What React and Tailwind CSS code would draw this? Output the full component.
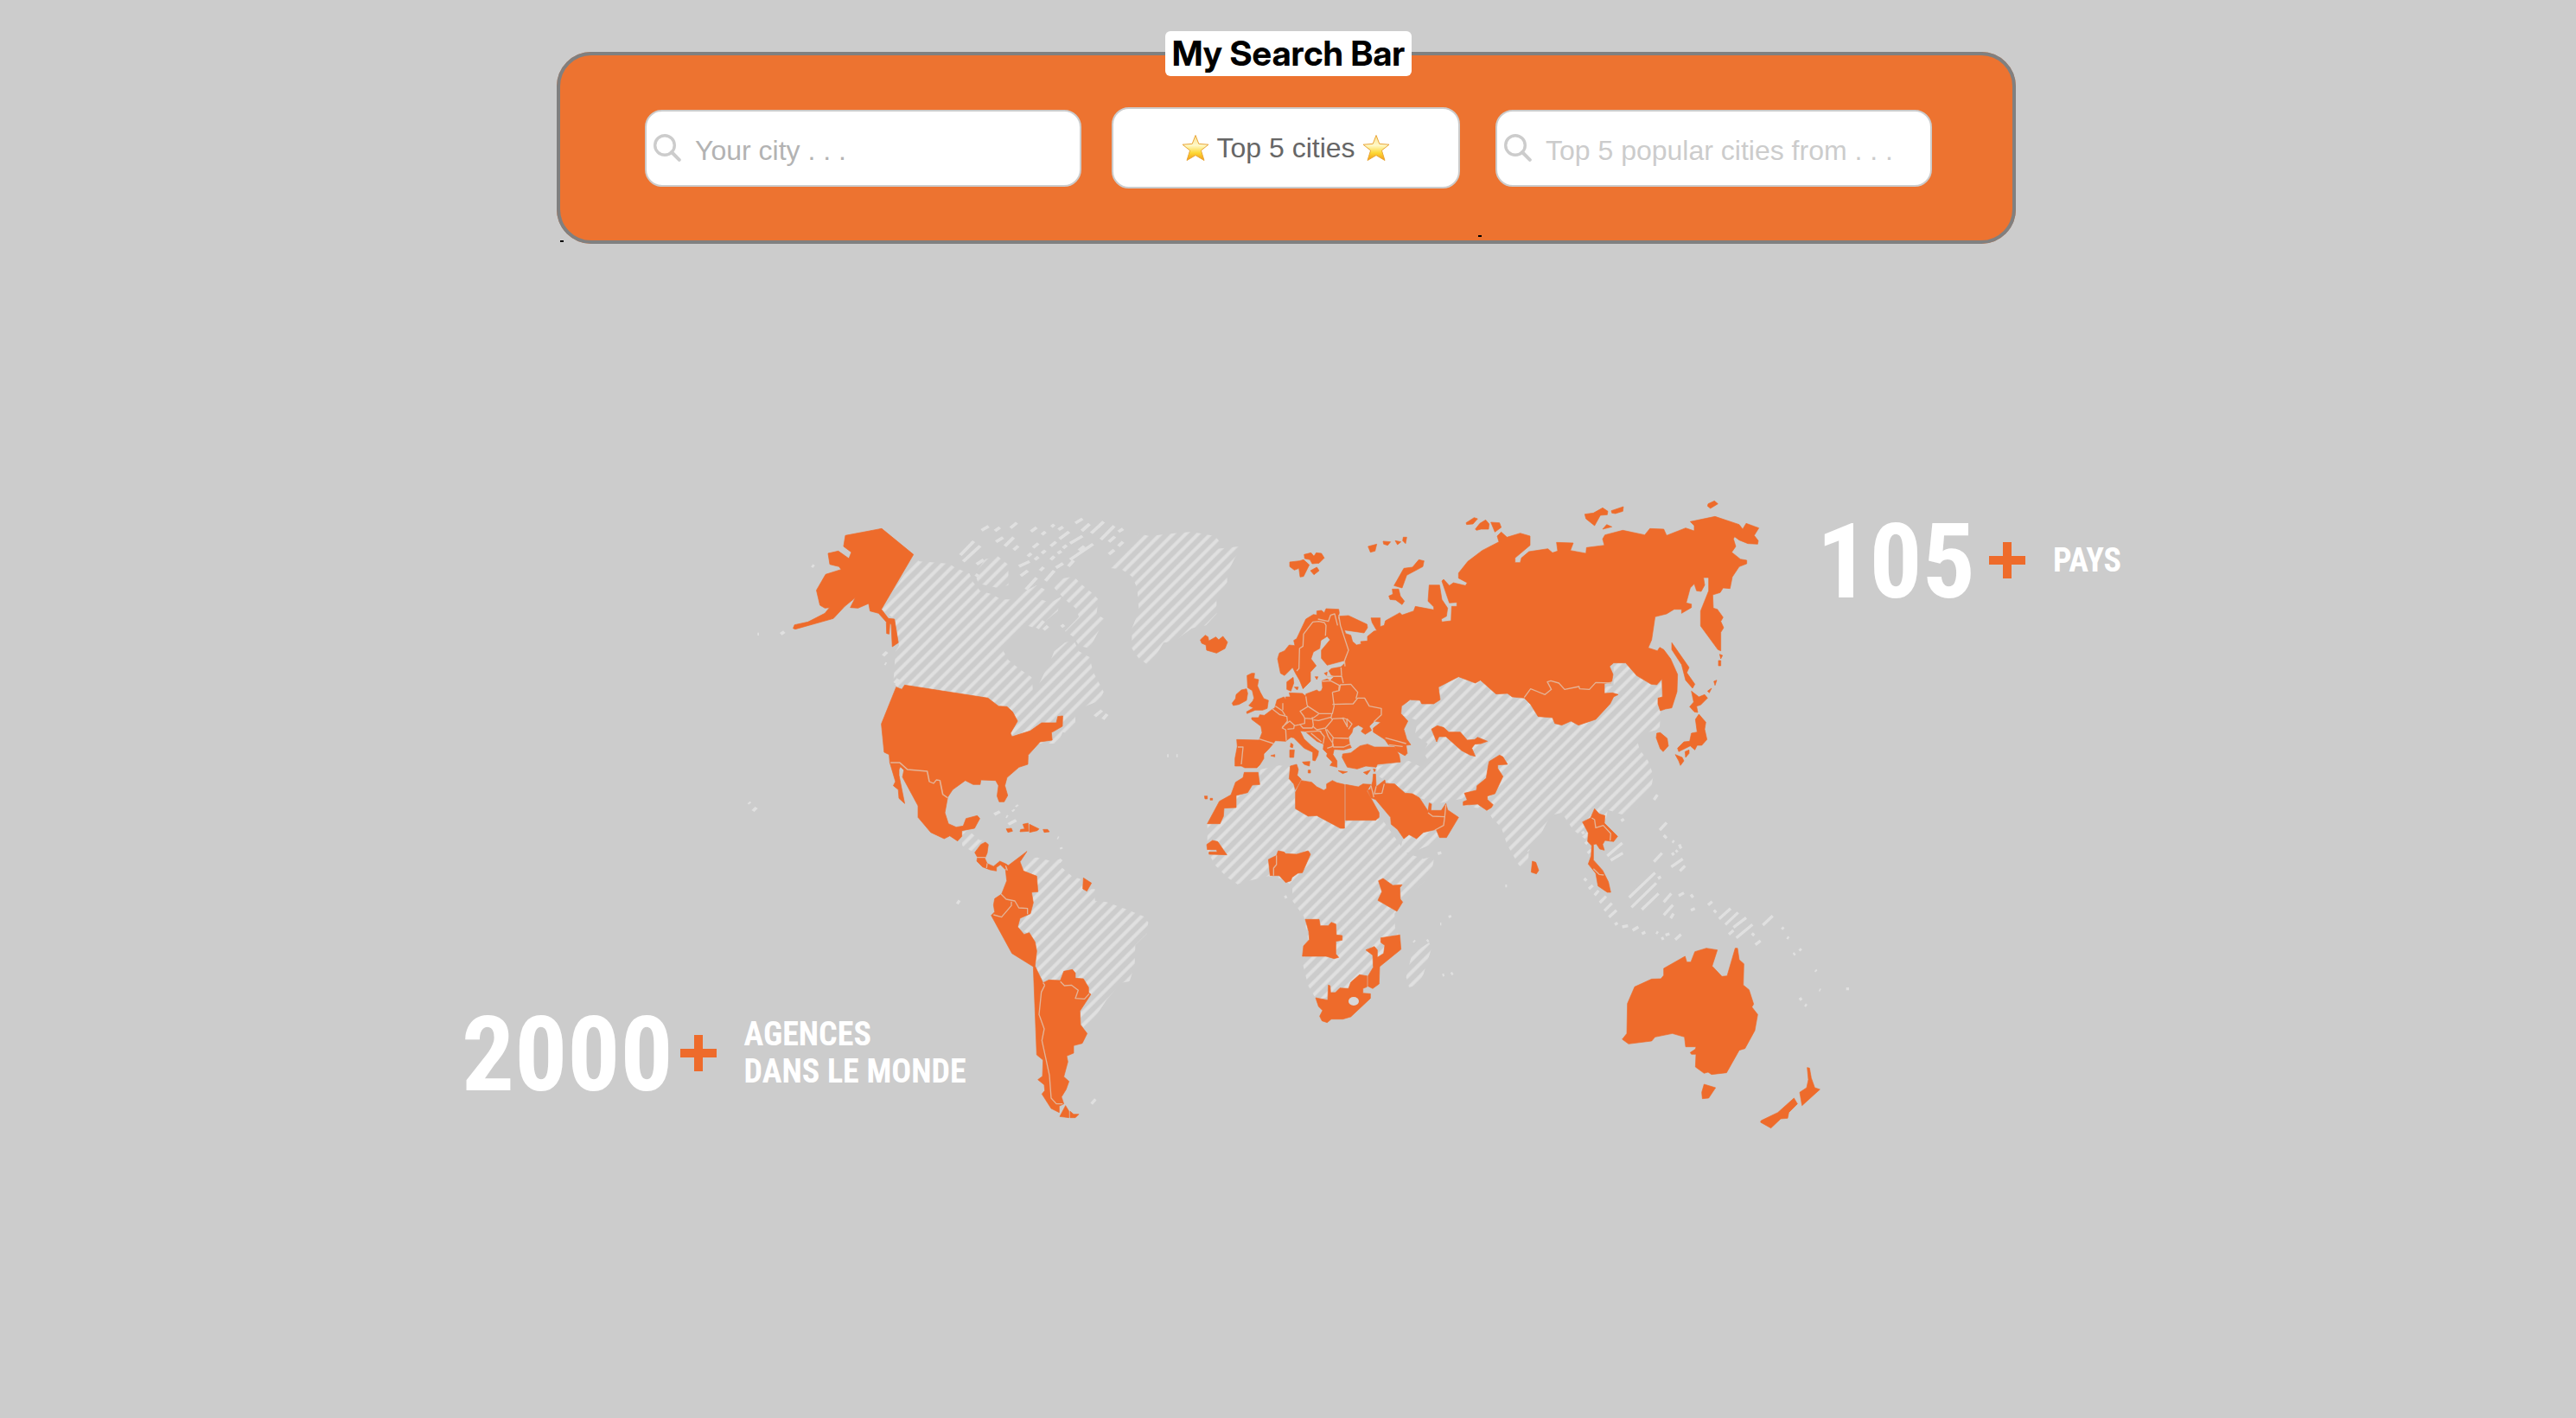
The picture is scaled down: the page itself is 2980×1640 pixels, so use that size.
// Each sheet of the map is drawn on its own grid; `at` places the grid on the world.
const WEST = "translate(840 560) scale(0.40816 0.33333)";
const SOUTH_AMERICA = "translate(960 860) scale(0.33333)";
const EUROPE = "translate(1380 560) scale(0.33333)";
const AFRICA = "translate(1380 860) scale(0.33333)";
const ASIA = "translate(1700 560) scale(0.33333)";
const OCEANIA = "translate(1780 880) scale(0.33333)";

const hatched = [
  {
    at: WEST,
    d: `M536,256 L548,268 600,272 632,276 650,290 690,310 700,340 720,370 750,380 780,400 820,400 850,370 880,350 910,370 890,400 920,410 950,390 940,440 910,470 880,500 850,490 800,540 786,580 800,610 830,640 866,670 870,720 884,700 900,660 920,610 930,580 960,550 985,540 1000,580 1030,600 1040,650 1070,720 1060,750 1000,780 990,800 990,830 965,865 954,860 940,900 820,900 500,720 474,690 480,580 490,560 477,468 440,434Z
    M940,330 L985,320 1010,350 1040,380 1055,400 1050,450 1075,470 1060,500 1030,570 1000,560 985,530 960,510 1000,460 990,430 960,400 930,360Z
    M735,260 L770,250 800,280 800,350 770,360 715,345 705,310Z
    M1080,290 L1150,200 1170,172 1200,180 1270,170 1320,165 1385,180 1400,200 1385,225 1460,215 1440,260 1420,310 1420,340 1390,400 1390,450 1360,490 1320,500 1270,545 1240,550 1200,630 1170,605 1150,570 1150,500 1170,440 1165,360 1150,320 1120,295Z`,
  },
  {
    at: SOUTH_AMERICA,
    d: `M455,310 L480,300 520,335 540,335 505,380 460,355Z
    M684,400 L720,395 770,408 800,400 805,430 840,460 870,470 880,505 920,505 920,545 960,550 1030,575 1090,600 1105,620 1100,660 1060,700 1058,770 1040,825 1010,830 960,890 920,950 880,985 850,940 850,820 745,830 712,780 690,660 650,640 690,590 700,500 665,440Z`,
  },
  {
    at: AFRICA,
    d: `M232,90 L300,76 336,80 350,150 358,230 430,250 520,296 530,260 640,260 660,268 740,380 800,400 838,390 830,440 800,480 728,550 700,590 702,650 720,670 650,740 540,860 430,890 400,840 380,760 400,680 385,600 345,545 345,500 320,470 262,460 200,475 155,488 120,465 75,420 50,370 50,278 94,270 150,180 232,142Z
    M720,370 L730,320 850,290 850,340 780,370 740,380Z
    M760,730 L820,690 828,710 800,800 780,840 750,845 740,810Z`,
  },
  {
    at: EUROPE,
    d: `M722,800 L754,740 858,740 852,704 922,660 998,670 1150,720 1460,700 1460,620 1502,620 1590,694 1628,670 1622,800 1620,850 1580,860 1540,880 1550,920 1580,960 1598,1010 1590,1060 1540,1120 1500,1150 1440,1130 1420,1220 1360,1230 1320,1200 1280,1140 1240,1150 1200,1230 1165,1270 1165,1300 1140,1330 1130,1320 1090,1250 1070,1190 1040,1160 1020,1130 938,1114 940,1090 840,1110 760,1076 700,1050 640,1010 636,980 720,964 750,960 790,980 820,965 800,930 815,900 770,870 780,820 735,805Z`,
  },
];

const dashes = [
  {
    at: WEST,
    d: `M724,160 744,146M762,162 776,150M806,152 824,134M864,164 880,150M922,148 930,140M765,200 785,185M790,215 815,185M664,246 702,198M672,268 720,214M710,278 730,262M815,228 828,214M855,250 865,240M870,220 885,205M895,175 905,165M920,215 935,200M945,190 972,165M942,158 955,148M990,135 1010,120M1008,162 1030,138M1035,170 1070,130M1062,192 1100,145M1085,200 1102,182M1112,165 1125,155M975,205 1010,180M955,222 965,212M1000,230 1015,215M975,262 1040,208M940,240 950,232M920,262 930,250M935,290 955,275M895,240 905,230M875,262 885,252M830,285 860,268M835,318 855,300M890,300 900,288M850,365 880,325M905,335 930,300M970,285 985,265M1085,243 1100,228M1112,215 1125,200M708,320 714,312M243,282 249,286M89,520 93,520M155,520 165,512M76,1134 86,1122M64,1104 68,1108M445,595 456,582M478,690 488,676M450,622 454,624M760,1146 776,1136M800,1180 822,1166M794,1152 798,1154M812,1130 816,1134M822,1114 826,1118M1045,805 1065,785M1068,815 1080,798M882,500 900,475M900,505 912,492M950,495 958,488M1250,942 1254,942M1276,942 1280,942`,
  },
  {
    at: SOUTH_AMERICA,
    d: `M442,556 450,544M908,1250 922,1234M796,412 804,402M802,360 804,366M790,326 794,328`,
  },
  {
    at: AFRICA,
    d: `M850,382 862,378M1084,494 1090,494M890,596 894,604M858,626 862,626M766,684 770,688M812,686 818,682M866,804 872,802M896,800 902,796M318,534 326,530M1164,370 1166,372`,
  },
  {
    at: OCEANIA,
    d: `M420,240 444,214M434,258 444,268M400,350 428,320M314,474 404,388M322,508 408,424M358,516 416,460M414,408 424,402M158,408 166,416M174,444 188,432M194,466 208,450M212,492 234,470M228,520 254,494M244,542 270,518M264,568 274,562M290,576 310,572M326,588 346,576M358,600 370,594M408,594 414,598M426,618 434,614M440,604 454,600M474,620 494,602M434,490 460,460M434,535 466,500M458,546 468,530M486,468 504,458M528,464 536,474M528,518 542,512M588,500 602,488M608,518 616,526M626,548 666,512M648,568 692,526M660,602 676,588M676,578 720,544M686,614 742,568M740,598 748,606M752,638 770,624M778,570 812,538M844,578 850,584M862,612 868,616M884,672 890,668M905,652 911,658M960,726 964,730M906,822 912,830M924,846 930,850M1072,786 1072,796M974,794 978,796M462,326 470,320M488,290 494,304M460,368 500,340M490,382 508,364M238,330 290,285M250,345 292,320M170,320 184,308M162,288 170,280M150,252 158,246M400,135 412,118M464,278 470,282M476,316 482,310M286,208 296,202`,
  },
];

const solid = [
  {
    at: WEST,
    d: `M338,178 L441,154 531,244 440,434 460,466 477,468 488,550 471,564 468,486 464,484 462,520 455,518 454,478 432,448 408,440 404,414 374,430 352,428 366,394 336,424 304,466 196,503 190,500 194,488 232,478 280,448 293,428 280,430 266,420 256,368 282,313 326,296 320,286 294,278 289,240 318,232 348,258 355,236 333,216Z
    M482,704 L498,712 506,697 742,742 772,770 796,772 812,790 826,822 806,864 810,876 862,856 894,828 936,828 940,806 954,804 953,840 922,862 924,888 890,894 856,940 855,972 830,982 796,1018 790,1046 798,1080 788,1102 774,1102 768,1082 772,1046 764,1028 722,1026 720,1042 700,1042 678,1028 642,1060 628,1086 620,1140 630,1178 652,1190 672,1186 680,1160 712,1150 719,1160 704,1194 668,1202 668,1222 656,1238 634,1220 618,1230 580,1208 544,1156 544,1116 500,1016 504,992 494,980 490,990 490,1010 506,1108 490,1090 488,1060 474,1046 480,1032 464,966 462,938 448,930 440,832Z
    M1344,540 L1358,524 1366,530 1368,544 1388,530 1396,540 1408,528 1421,548 1414,570 1390,586 1362,576 1360,558 1348,552Z`,
  },
  {
    at: SOUTH_AMERICA,
    d: `M503,378 L524,350 540,342 550,350 546,380 538,398 546,416 568,426 590,408 612,418 620,424 608,436 592,420 578,430 578,442 556,438 530,428 510,408 512,394Z
    M618,424 L684,374 660,410 672,442 718,460 722,514 700,516 706,552 696,590 660,606 652,636 674,662 692,656 712,688 718,720 712,772 740,830 760,820 800,822 812,790 842,784 852,796 852,814 880,816 898,846 898,864 906,870 868,928 870,976 893,1006 876,1040 846,1048 846,1074 822,1084 826,1104 812,1156 830,1172 820,1200 804,1226 812,1250 796,1258 796,1280 768,1266 736,1216 746,1204 744,1184 722,1166 738,1154 740,1098 718,1080 706,774 632,728 560,596 572,584 568,560 572,538 596,522 614,476 610,440Z
    M818,1256 L830,1276 830,1298 798,1294Z M834,1276 L846,1286 864,1286 852,1298 834,1298Z
    M880,466 L908,484 892,512 878,504Z
    M612,296 L630,294 634,304 618,308Z M670,280 L688,276 690,304 660,306 662,298 676,296Z M693,280 L726,296 720,302 693,308Z M740,298 L756,298 762,306 744,308Z`,
  },
  {
    at: EUROPE,
    d: `M508,458 L540,456 604,486 606,498 594,516 526,506 530,518 548,524 554,546 568,558 584,554 582,546 606,544 606,528 628,510 638,508 622,480 618,464 650,464 650,494 664,490 668,474 718,446 726,454 766,440 772,424 836,436 836,426 816,406 820,350 856,350 864,400 884,430 880,458 862,468 864,478 896,474 898,424 916,424 916,410 890,412 864,336 870,330 890,352 904,342 946,352 952,342 922,326 922,308 954,268 1004,230 1062,200 1056,180 1070,166 1090,184 1136,170 1170,180 1170,212 1118,256 1118,272 1136,272 1140,256 1166,234 1232,224 1248,238 1266,232 1262,202 1320,204 1310,230 1364,240 1366,220 1428,212 1422,190 1430,176 1492,160 1568,176 1586,154 1634,156 1644,178 1710,152 1740,162 1740,144 1726,130 1812,112 1896,140 1908,156 1920,136 1964,152 1948,178 1962,196 1960,208 1926,206 1896,194 1880,182 1876,190 1884,216 1870,236 1900,260 1922,264 1922,276 1896,286 1872,322 1864,362 1840,360 1830,376 1804,384 1806,430 1820,434 1840,462 1832,476 1842,498 1832,514 1832,578 1822,574 1762,492 1762,440 1790,370 1790,324 1772,324 1776,350 1764,372 1748,370 1740,346 1726,360 1712,412 1730,416 1730,428 1696,448 1696,434 1670,434 1644,450 1604,460 1592,540 1580,568 1612,578 1620,566 1634,574 1658,606 1682,660 1680,720 1662,776 1640,780 1622,786 1614,762 1614,742 1630,738 1628,676 1610,696 1590,694 1540,664 1502,620 1460,620 1446,632 1458,660 1454,684 1428,692 1428,726 1456,724 1476,730 1460,738 1448,762 1398,816 1338,836 1312,822 1280,836 1256,830 1248,810 1198,806 1172,764 1150,742 1108,738 1092,726 1052,728 998,680 980,690 922,668 852,704 858,748 836,762 794,762 788,750 754,748 724,770 722,796 746,822 732,850 742,884 756,904 740,906 744,934 736,942 708,926 700,908 680,906 666,886 626,860 626,846 652,826 630,822 612,840 620,854 598,868 584,858 592,846 574,836 556,846 552,862 540,878 544,902 550,914 524,922 490,920 486,938 500,960 500,982 476,976 484,964 464,944 466,934 452,920 454,902 430,892 404,870 390,858 372,856 386,884 412,908 436,926 434,940 424,960 416,958 416,930 386,916 350,880 340,878 322,892 286,890 276,904 262,920 246,936 246,952 232,974 222,984 180,984 168,978 146,978 146,952 154,910 152,886 230,888 240,862 236,840 204,816 204,810 228,810 232,800 248,802 274,782 284,776 292,748 316,738 322,748 322,738 338,738 334,724 380,726 392,736 392,728 430,714 438,720 446,716 450,706 448,682 466,676 476,682 492,666 480,662 472,648 480,640 514,634 526,622 540,576 510,490Z
    M294,606 L300,586 318,578 334,558 354,560 350,542 360,536 392,468 418,452 430,454 430,440 446,438 456,446 462,432 506,434 508,446 504,464 512,490 540,576 526,612 466,628 446,604 446,576 476,540 466,528 444,542 440,570 418,582 410,606 428,630 408,652 408,684 382,710 370,680 356,656 346,636 318,664 304,656Z
    M326,686 L348,670 350,690 340,718 326,712Z M352,704 L366,704 362,714Z M424,668 L434,668 430,678Z M456,656 L466,652 464,664Z
    M188,664 L204,656 214,656 212,674 228,678 224,700 234,722 246,744 262,750 258,778 242,784 216,784 188,796 186,790 210,776 194,768 208,752 212,742 206,716 190,706Z
    M136,760 L148,744 150,730 168,714 186,710 190,726 186,750 160,764 140,768Z
    M520,936 L548,932 580,908 606,902 630,912 678,912 700,912 716,940 720,964 640,972 636,982 600,978 570,988 536,982 518,948Z
    M340,898 L348,904 346,914 338,912Z M336,922 L352,922 350,948 336,948Z M380,964 L406,962 404,978 386,972Z M504,994 L536,998 520,1004Z M592,1000 L616,992 604,1008Z M270,942 L284,938 284,946Z M400,992 h8 v10 h-8Z
    M336,270 L370,266 384,262 404,280 384,320 372,322 368,292 352,298 336,286Z M386,244 L410,238 420,250 428,238 446,240 456,256 438,274 414,276 406,262 388,258Z M408,300 L430,288 438,300 420,314Z
    M608,216 L638,208 632,232 616,236Z M660,198 L686,200 676,212 662,208Z M702,196 L722,200 710,210Z M730,184 L742,184 738,206 728,196Z
    M698,352 L732,292 762,288 784,262 802,266 798,286 742,316 726,360Z M692,364 L714,364 720,388 734,406 726,418 704,402 684,400 680,388 694,382Z
    M948,134 L976,116 988,120 972,138 950,140Z M980,156 L996,136 1016,124 1028,138 1026,156 1000,156 984,160Z M1034,132 L1064,134 1070,150 1048,166Z
    M178,1000 L226,1000 232,1042 206,1044 190,1070 150,1080 150,1122 108,1124 106,1152 94,1178 50,1178 92,1100 132,1078 148,1034 174,1018Z
    M40,1082 h10 v10 h-8Z M60,1090 h8 v6 h-8Z
    M48,1250 L68,1236 86,1240 118,1286 56,1284 56,1276 84,1276 82,1268 50,1268Z
    M338,978 L360,972 366,990 362,1010 376,1024 356,1060 350,1040 334,1022Z
    M376,1028 L412,1034 430,1050 454,1062 464,1056 464,1040 484,1028 500,1036 526,1042 526,1194 512,1194 430,1150 400,1152 356,1126 356,1068Z
    M530,1042 L574,1050 590,1040 618,1042 604,1064 646,1140 646,1156 634,1166 530,1166Z
    M626,1006 L634,1006 636,1050 666,1026 668,1038 700,1040 736,1072 762,1074 786,1088 816,1134 820,1106 828,1110 826,1132 862,1132 878,1108 884,1130 922,1156 880,1226 856,1226 844,1198 800,1208 776,1230 750,1216 732,1230 710,1198 688,1180 686,1156 634,1094 618,1088 606,1062 616,1058 624,1030Z
    M626,988 L634,990 630,998Z
    M828,850 L848,838 870,844 888,860 928,860 952,888 978,886 988,878 1022,892 1000,900 978,902 968,916 980,944 962,940 932,924 878,876 854,876 846,894Z
    M1028,962 L1064,940 1076,946 1092,972 1058,974 1058,986 1076,1014 1048,1074 1022,1082 1022,1094 1042,1112 1036,1122 1020,1132 988,1110 938,1114 938,1102 952,1096 942,1072 984,1062 986,1046 1018,1020 1024,982Z`,
  },
  {
    at: AFRICA,
    d: `M262,402 L290,388 296,372 316,376 322,382 360,384 400,372 408,384 380,448 364,450 344,464 340,476 322,482 300,458 268,458Z
    M644,476 L660,468 694,492 726,490 718,500 720,540 728,550 708,582 642,544 656,514Z
    M390,610 L438,610 442,632 470,632 480,620 496,626 498,664 518,666 518,682 496,686 496,730 506,742 490,746 462,738 380,738 384,702 404,680 402,652Z
    M652,674 L718,664 722,714 648,774 646,834 624,850 608,842 608,806 626,776 624,734 600,716 630,704 640,716 640,742 662,728 666,700 652,690Z
    M426,882 L468,890 470,838 476,840 478,864 494,864 510,848 540,850 548,828 578,802 604,806 604,844 590,850 590,866 616,868 616,884 548,948 520,956 480,956 466,968 448,962 440,946 450,926 436,912Z
    M1178,408 L1190,412 1200,440 1192,452 1174,446Z`,
  },
  {
    at: ASIA,
    d: `M400,104 L430,100 462,82 480,94 478,106 454,108 434,144 404,120Z M492,92 L534,78 532,94 506,102 494,100Z M462,156 L476,140 494,148Z M828,68 L850,58 862,68 836,84 826,76Z
    M702,550 L762,636 754,654 782,694 774,708 750,680 736,626 702,574Z
    M864,612 h8 v18 h-8Z M868,590 L878,594 872,606Z M848,684 L858,680 852,698Z M826,718 L840,708 832,724Z
    M770,718 L796,738 816,730 826,742 802,766 788,770 792,792 780,790 764,772 778,756Z
    M796,798 L820,826 816,850 824,886 806,906 790,906 782,922 766,908 726,928 722,916 744,894 764,892 770,864 790,860 784,816Z
    M748,928 L762,922 762,934 750,948Z M714,938 L738,948 744,960 732,976 726,960Z
    M650,864 L662,862 686,882 690,908 672,928 662,918 648,880Z
    M392,1172 L420,1158 434,1126 450,1144 470,1150 468,1176 514,1222 500,1240 470,1236 462,1250 468,1270 452,1266 440,1248 430,1250 430,1304 462,1340 482,1380 490,1416 478,1416 446,1394 438,1350 412,1318 422,1290 424,1254 410,1240 412,1210Z`,
  },
  {
    at: OCEANIA,
    d: `M333,784 L392,757 424,756 434,744 434,720 508,678 514,698 528,698 542,662 582,650 620,656 602,712 636,748 654,746 682,650 690,650 696,690 712,704 710,778 730,794 746,844 740,854 760,880 750,936 716,998 696,1004 652,1082 600,1088 588,1080 574,1084 544,1062 546,1018 530,1018 526,1012 544,1000 546,992 510,992 506,958 464,946 404,958 392,972 312,982 290,966 306,946 308,842Z
    M574,1122 L614,1134 590,1170 568,1172 566,1150Z
    M932,1064 L940,1066 946,1100 958,1134 976,1140 914,1196 906,1150 930,1134 936,1106Z M886,1170 L898,1190 868,1220 864,1240 840,1242 806,1274 770,1254 772,1248 830,1220Z`,
  },
];

const borders = [
  { at: WEST, d: `M466,966 492,966 514,990 570,996 576,1032 588,1038 596,1026 606,1028 614,1076 628,1088` },
  {
    at: SOUTH_AMERICA,
    d: `M594,522 612,540 642,546 656,570 686,572 686,592M630,548 630,562 596,602 568,594M746,838 734,862 726,940 744,990 736,1030 762,1150 768,1230 786,1250 808,1250M740,830 746,838M800,826 814,840 838,838 862,856 852,884 884,886 900,868M510,395 540,395M546,416 544,432M610,424 616,440`,
  },
  {
    at: EUROPE,
    d: `M230,884 280,900M156,912 174,912 168,972M276,780 302,800 326,806 328,822 310,846 322,852 324,890M310,842 336,822 352,836 350,848 328,850M286,770 310,786 320,802M312,760 312,784M392,736 396,764 398,770 438,796 484,796 490,770 484,722M398,772 372,788 384,804 388,812 414,814 436,798M352,838 388,830 388,812M414,808 418,836 414,846 382,846 370,832M418,818 436,820 480,808 482,798M416,840 430,852 460,846 484,818 478,808M464,850 488,880 540,882M484,814 520,812 536,842 534,816 520,810M534,814 552,832 540,850M460,850 470,876 486,900 488,912 524,912 546,902M440,856 456,876 452,900M390,860 440,856 446,860M410,864 446,894M486,880 484,910 466,916M484,764 556,762 572,742 596,742 612,770 654,778 654,800 628,824M484,722 508,716 512,696 548,694 572,722 566,744M448,684 478,682 508,698 506,718M466,668 516,666 522,690M514,636 516,664M506,454 512,490 540,576 526,612 528,632M668,880 740,900M680,904 728,910M360,648 368,640 370,570 382,562 384,520 416,478 436,476 456,480 462,490 460,526M434,468 470,476 478,454 492,450 502,490M618,1046 628,1086M636,1048 630,1074 656,1072 664,1040M816,1140 832,1152 874,1154 870,1184 840,1200M878,1112 874,1154`,
  },
  { at: AFRICA, d: `M290,388 290,420 280,432 280,458` },
  {
    at: ASIA,
    d: `M190,740 212,710 262,730 284,712 270,686 282,682 310,690 330,712 380,702 382,710 416,712 438,688 492,690M424,1158 434,1164 438,1192 464,1184 490,1212 488,1236M430,1334 450,1354 466,1356`,
  },
];

function WorldMap() {
  return (
    <svg viewBox="490 570 2000 740" className="col-start-1 row-start-1 h-auto w-full" role="img" aria-label="World map">
      <defs>
        <pattern id="hatch" width="10.25" height="10.25" patternUnits="userSpaceOnUse" patternTransform="rotate(45)">
          <rect x="0.3" width="4" height="11" fill="#e0e0e0" />
        </pattern>
        <clipPath id="hatched-land">
          {hatched.map((s, i) => (
            <path key={i} d={s.d} transform={s.at} />
          ))}
        </clipPath>
      </defs>
      <rect x="490" y="570" width="2000" height="740" fill="url(#hatch)" clipPath="url(#hatched-land)" />
      {dashes.map((s, i) => (
        <path key={i} d={s.d} transform={s.at} fill="none" stroke="#e0e0e0" strokeWidth="10" />
      ))}
      {solid.map((s, i) => (
        <path key={i} d={s.d} transform={s.at} fill="#ee6b2b" stroke="#ee6b2b" strokeWidth="2" strokeLinejoin="round" />
      ))}
      {borders.map((s, i) => (
        <path key={i} d={s.d} transform={s.at} fill="none" stroke="#e3b498" strokeWidth="4" strokeLinejoin="round" />
      ))}
      <ellipse cx="1566" cy="1158" rx="6" ry="5" fill="#d8d8d8" />
    </svg>
  );
}

function Star() {
  return (
    <svg viewBox="0 0 32 32" className="size-8" aria-hidden="true">
      <defs>
        <linearGradient id="gold" x1="0" y1="0" x2="0" y2="1">
          <stop offset="0" stopColor="#fbe08a" />
          <stop offset="0.4" stopColor="#fff9c9" />
          <stop offset="0.7" stopColor="#fdd835" />
          <stop offset="1" stopColor="#f39a14" />
        </linearGradient>
      </defs>
      <path
        d="M16 1.5 L19.8 11.4 L31 12.2 L22.4 19 L26 30.5 L16 24.6 L6 30.5 L9.6 19 L1 12.2 L12.2 11.4Z"
        fill="url(#gold)"
        stroke="#e9a63a"
        strokeWidth="1"
        strokeLinejoin="round"
      />
    </svg>
  );
}

function Magnifier() {
  return (
    <svg viewBox="0 0 32 32" className="size-8 shrink-0" fill="none" stroke="#cccccc" aria-hidden="true">
      <circle cx="13" cy="13" r="11.3" strokeWidth="3.4" />
      <path d="M21 21 L29.8 29.8" strokeWidth="4" strokeLinecap="round" />
    </svg>
  );
}

function SearchField({ label, tone }) {
  return (
    <label className="flex h-[89px] max-w-[505px] min-w-0 flex-1 items-center gap-4 rounded-[20px] border-2 border-[#cccccc] bg-white px-2">
      <Magnifier />
      <input type="text" aria-label={label} placeholder={label} className={`w-full min-w-0 pt-1.5 text-[32px] outline-none ${tone}`} />
    </label>
  );
}

function Plus() {
  return (
    <svg viewBox="0 0 42 42" className="size-[42px] shrink-0" role="img" aria-label="plus">
      <path d="M0 16H16V0H26V16H42V26H26V42H16V26H0Z" fill="#ee6b2b" />
    </svg>
  );
}

function Stat({ value, valueGap, children, className }) {
  return (
    <div className={`col-start-1 row-start-1 flex items-center font-['Roboto_Condensed',Roboto,sans-serif] font-bold text-white ${className}`}>
      <span className={`pt-1 text-[121px] leading-[124px] ${valueGap}`}>{value}</span>
      <Plus />
      <span className="pl-8 text-[38px] leading-[43px]">{children}</span>
    </div>
  );
}

export default function App() {
  return (
    <main className="min-h-screen overflow-hidden bg-[#cccccc] pt-9 font-['Liberation_Sans',Arial,sans-serif]">
      <header className="pr-1">
        <div className="relative mx-auto w-[57%] max-w-[1688px]">
          <fieldset className="rounded-[40px] border-4 border-[#808080] bg-[#ed7330] pt-9 pr-[93px] pb-[60px] pl-[98px]">
            <legend className="mx-auto rounded-md bg-white px-2 text-center font-['Inter_Display',Inter,sans-serif] text-[40px] leading-[52px] font-bold text-black">
              My Search Bar
            </legend>
            <div className="flex items-center justify-between">
              <SearchField label="Your city . . ." tone="placeholder:text-[#b3b3b3]" />
              <button type="button" className="mr-1.5 flex h-[94px] w-[403px] shrink-0 items-center justify-center gap-2 rounded-[20px] border-2 border-[#cccccc] bg-white text-[32px] text-[#666666]">
                <Star />
                Top 5 cities
                <Star />
              </button>
              <SearchField label="Top 5 popular cities from . . ." tone="placeholder:text-[#cccccc]" />
            </div>
          </fieldset>
          <i className="absolute bottom-0.5 left-1 h-0.5 w-1 bg-black" />
          <i className="absolute bottom-2 left-[1066px] h-0.5 w-1 bg-black" />
        </div>
      </header>
      <section className="mx-auto mt-72 grid w-full max-w-[2000px]">
        <WorldMap />
        <Stat value="2000" valueGap="pr-2" className="mb-7 ml-11 self-end justify-self-start">
          AGENCES
          <br />
          DANS LE MONDE
        </Stat>
        <Stat value="105" valueGap="pr-4" className="mt-3.5 mr-9 self-start justify-self-end">PAYS</Stat>
      </section>
    </main>
  );
}
